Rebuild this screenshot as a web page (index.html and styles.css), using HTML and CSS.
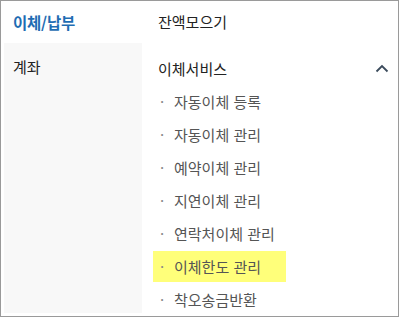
FILE: index.html
```html
<!DOCTYPE html>
<html lang="ko">
<head>
<meta charset="utf-8">
<link rel="stylesheet" href="styles.css">
</head>
<body>
<div class="frame">
  <div class="left">
    <div class="left-title">이체/납부</div>
    <div class="left-panel">
      <div class="left-item">계좌</div>
    </div>
  </div>
  <div class="right">
    <div class="head-row">잔액모으기</div>
    <div class="section-row">
      <span>이체서비스</span>
      <svg class="chev" width="14" height="9" viewBox="0 0 14 9"><polyline points="1.5,7.5 7,2 12.5,7.5" fill="none" stroke="#3b4b5c" stroke-width="1.8"/></svg>
    </div>
    <ul class="items">
      <li><span class="item"><span class="dot">·</span>자동이체 등록</span></li>
      <li><span class="item"><span class="dot">·</span>자동이체 관리</span></li>
      <li><span class="item"><span class="dot">·</span>예약이체 관리</span></li>
      <li><span class="item"><span class="dot">·</span>지연이체 관리</span></li>
      <li><span class="item"><span class="dot">·</span>연락처이체 관리</span></li>
      <li><span class="item hl"><span class="dot">·</span>이체한도 관리</span></li>
      <li><span class="item"><span class="dot">·</span>착오송금반환</span></li>
    </ul>
  </div>
</div>
</body>
</html>
```

FILE: styles.css
```css
html, body {
  margin: 0;
  padding: 0;
  background: #ffffff;
}
body {
  font-family: "Noto Sans CJK KR", "Noto Sans", sans-serif;
}
.frame {
  width: 399px;
  height: 317px;
  box-sizing: border-box;
  border: 1px solid #9a9a9a;
  display: flex;
  overflow: hidden;
  background: #fff;
}
.left {
  width: 141px;
  padding-left: 3px;
  box-sizing: border-box;
  display: flex;
  flex-direction: column;
}
.left-title {
  height: 42px;
  display: flex;
  align-items: center;
  padding-left: 9px;
  font-size: 15.5px;
  font-weight: 700;
  color: #1f6db3;
  letter-spacing: -0.2px;
}
.left-panel {
  flex: 1;
  background: #f8f8f8;
  margin-bottom: 3px;
}
.left-item {
  height: 46px;
  display: flex;
  align-items: center;
  padding-left: 9px;
  font-size: 15px;
  color: #222;
}
.right {
  flex: 1;
  display: flex;
  flex-direction: column;
}
.head-row {
  height: 43px;
  display: flex;
  align-items: center;
  padding-left: 16px;
  font-size: 15px;
  color: #222;
}
.section-row {
  margin-top: 10px;
  height: 34px;
  display: flex;
  align-items: center;
  justify-content: space-between;
  padding-left: 16px;
  padding-right: 9px;
  font-size: 15px;
  color: #222;
}
.chev {
  display: block;
}
.items {
  list-style: none;
  margin: 0;
  padding: 0 0 0 11px;
}
.items li {
  height: 33px;
  display: flex;
  align-items: center;
}
.item {
  display: inline-flex;
  align-items: center;
  height: 31px;
  padding-left: 7px;
  box-sizing: border-box;
  font-size: 15px;
  color: #555;
}
.dot {
  width: 14px;
  color: #888;
}
.hl {
  width: 133px;
  background: #ffff7a;
}
```
